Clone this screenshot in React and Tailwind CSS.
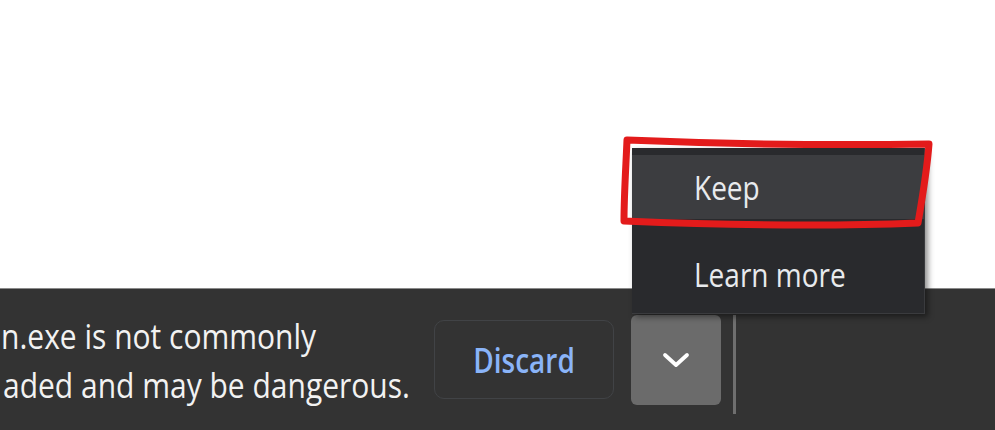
import React from "react";

export default function App() {
  return (
    <div className="relative w-[995px] h-[430px] overflow-hidden bg-white flex flex-col" style={{ fontFamily: '"Open Sans", "Noto Sans", sans-serif' }}>
      <div className="h-[288px] shrink-0 bg-white" />
      <div className="flex-1 bg-[#333333] border-t border-[#8a8a8a] flex items-start">
        <div className="w-[434px] shrink-0 pt-[22px] text-[30px] leading-[49px] text-[#f2f2f2] whitespace-nowrap">
          <div className="scale-y-[1.15] origin-center pl-[1px]">n.exe is not commonly</div>
          <div className="scale-y-[1.15] origin-center pl-[3px]">aded and may be dangerous.</div>
        </div>
        <div className="mt-[31px] w-[180px] h-[79px] rounded-[10px] border border-[#414346] flex items-center justify-center text-[28px] font-semibold text-[#8ab4f8]">
          <span className="scale-y-[1.2] inline-block">Discard</span>
        </div>
        <div className="ml-[17px] mt-[26px] w-[90px] h-[90px] rounded-[6px] bg-[#6b6b6b] flex items-center justify-center">
          <svg width="28" height="18" viewBox="0 0 28 18" fill="none">
            <path d="M3 4 L14 14 L25 4" stroke="white" strokeWidth="3.8" strokeLinecap="round" strokeLinejoin="round" />
          </svg>
        </div>
        <div className="ml-[12px] mt-[26px] w-[3px] h-[99px] bg-[#6f6f6f]" />
      </div>

      {/* popup menu */}
      <div className="absolute left-[632px] top-[148px] w-[293px] h-[166px] bg-[#292a2d] pt-[7px] shadow-[3px_3px_6px_rgba(0,0,0,0.45)] border-b border-r border-[#3a3b3e] text-[28px] text-[#e8eaed]">
        <div className="h-[64px] bg-[#3c3d40] flex items-center pl-[62px]">
          <span className="scale-y-[1.2] inline-block">Keep</span>
        </div>
        <div className="h-[88px] flex items-center pl-[62px] pt-[22px]">
          <span className="scale-y-[1.2] inline-block">Learn more</span>
        </div>
      </div>

      {/* red annotation */}
      <svg className="absolute left-0 top-0 pointer-events-none" width="995" height="430" viewBox="0 0 995 430">
        <path
          d="M627 140 C700 143, 800 146, 929 144 C927 170, 922 200, 918 223 C820 227, 720 225, 624 221 C624 195, 626 165, 627 140 Z"
          fill="none"
          stroke="#e31b1b"
          strokeWidth="7"
          strokeLinejoin="round"
        />
      </svg>
    </div>
  );
}
